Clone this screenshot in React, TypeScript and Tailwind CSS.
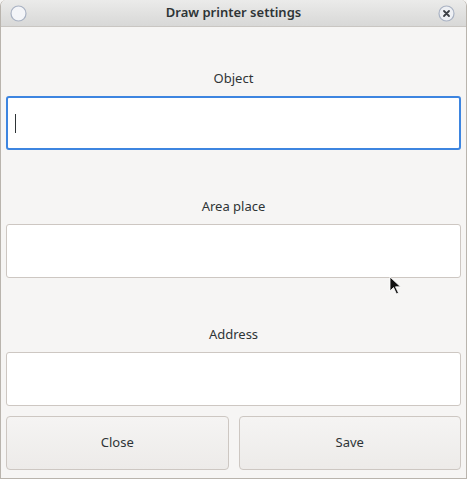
import React from "react";

const FONT = { fontFamily: '"Noto Sans", "Open Sans", sans-serif' };

function Field({ label, focused }: { label: string; focused?: boolean }) {
  return (
    <div className="flex flex-col">
      <div className="h-[18px] text-center text-[13px] leading-[18px] text-[#2e3436]">{label}</div>
      <div
        className={
          focused
            ? "mt-[9px] flex h-[54px] items-center rounded-[3px] border-2 border-[#3d85e0] bg-white pl-[7px]"
            : "mt-[9px] h-[54px] rounded-[3px] border border-[#cdc7c2] bg-white"
        }
      >
        {focused && <div className="h-[19px] w-px bg-[#2e3436]" />}
      </div>
    </div>
  );
}

export default function App() {
  return (
    <div style={FONT} className="relative h-[479px] w-[467px] overflow-hidden bg-[#f6f5f4]">
      <div className="flex h-full flex-col rounded-t-[6px] border-x border-b border-[#b9b4ad]">
        <header className="relative flex h-[27px] shrink-0 items-center justify-center rounded-t-[6px] border-b border-[#c9c6c2] bg-gradient-to-b from-[#ebebea] to-[#d8d8d7]">
          <svg className="absolute left-[9px] top-[5px]" width="17" height="17" viewBox="0 0 17 17">
            <circle cx="8.5" cy="8.5" r="7.5" fill="#f4f5f8" stroke="#a9b2c3" strokeWidth="1.2" />
          </svg>
          <span className="text-[13px] font-semibold text-[#2e3436]">Draw printer settings</span>
          <svg className="absolute right-[11px] top-[5px]" width="17" height="17" viewBox="0 0 17 17">
            <circle cx="8.5" cy="8.5" r="7.5" fill="#eef0f4" stroke="#a9b2c3" strokeWidth="1.2" />
            <path d="M6 6 L11 11 M11 6 L6 11" stroke="#3b3f45" strokeWidth="1.8" strokeLinecap="round" />
          </svg>
        </header>
        <main className="flex flex-1 flex-col px-[5px] pt-[42px]">
          <Field label="Object" focused />
          <div className="h-[47px]" />
          <Field label="Area place" />
          <div className="h-[47px]" />
          <Field label="Address" />
          <div className="mt-[10px] grid grid-cols-2 gap-[10px]">
            <button className="h-[54px] rounded-[4px] border border-[#cdc7c2] bg-gradient-to-b from-[#f5f4f3] to-[#edebe9] text-[13px] text-[#2e3436]">
              Close
            </button>
            <button className="h-[54px] rounded-[4px] border border-[#cdc7c2] bg-gradient-to-b from-[#f5f4f3] to-[#edebe9] text-[13px] text-[#2e3436]">
              Save
            </button>
          </div>
        </main>
      </div>
      <svg className="absolute left-[389px] top-[276px]" width="13" height="20" viewBox="0 0 13 20">
        <path d="M1 1 L1 15 L4.5 11.5 L7.5 18 L9.5 17 L6.5 10.8 L11.5 10.8 Z" fill="#111" stroke="#fff" strokeWidth="0.8" />
      </svg>
    </div>
  );
}
